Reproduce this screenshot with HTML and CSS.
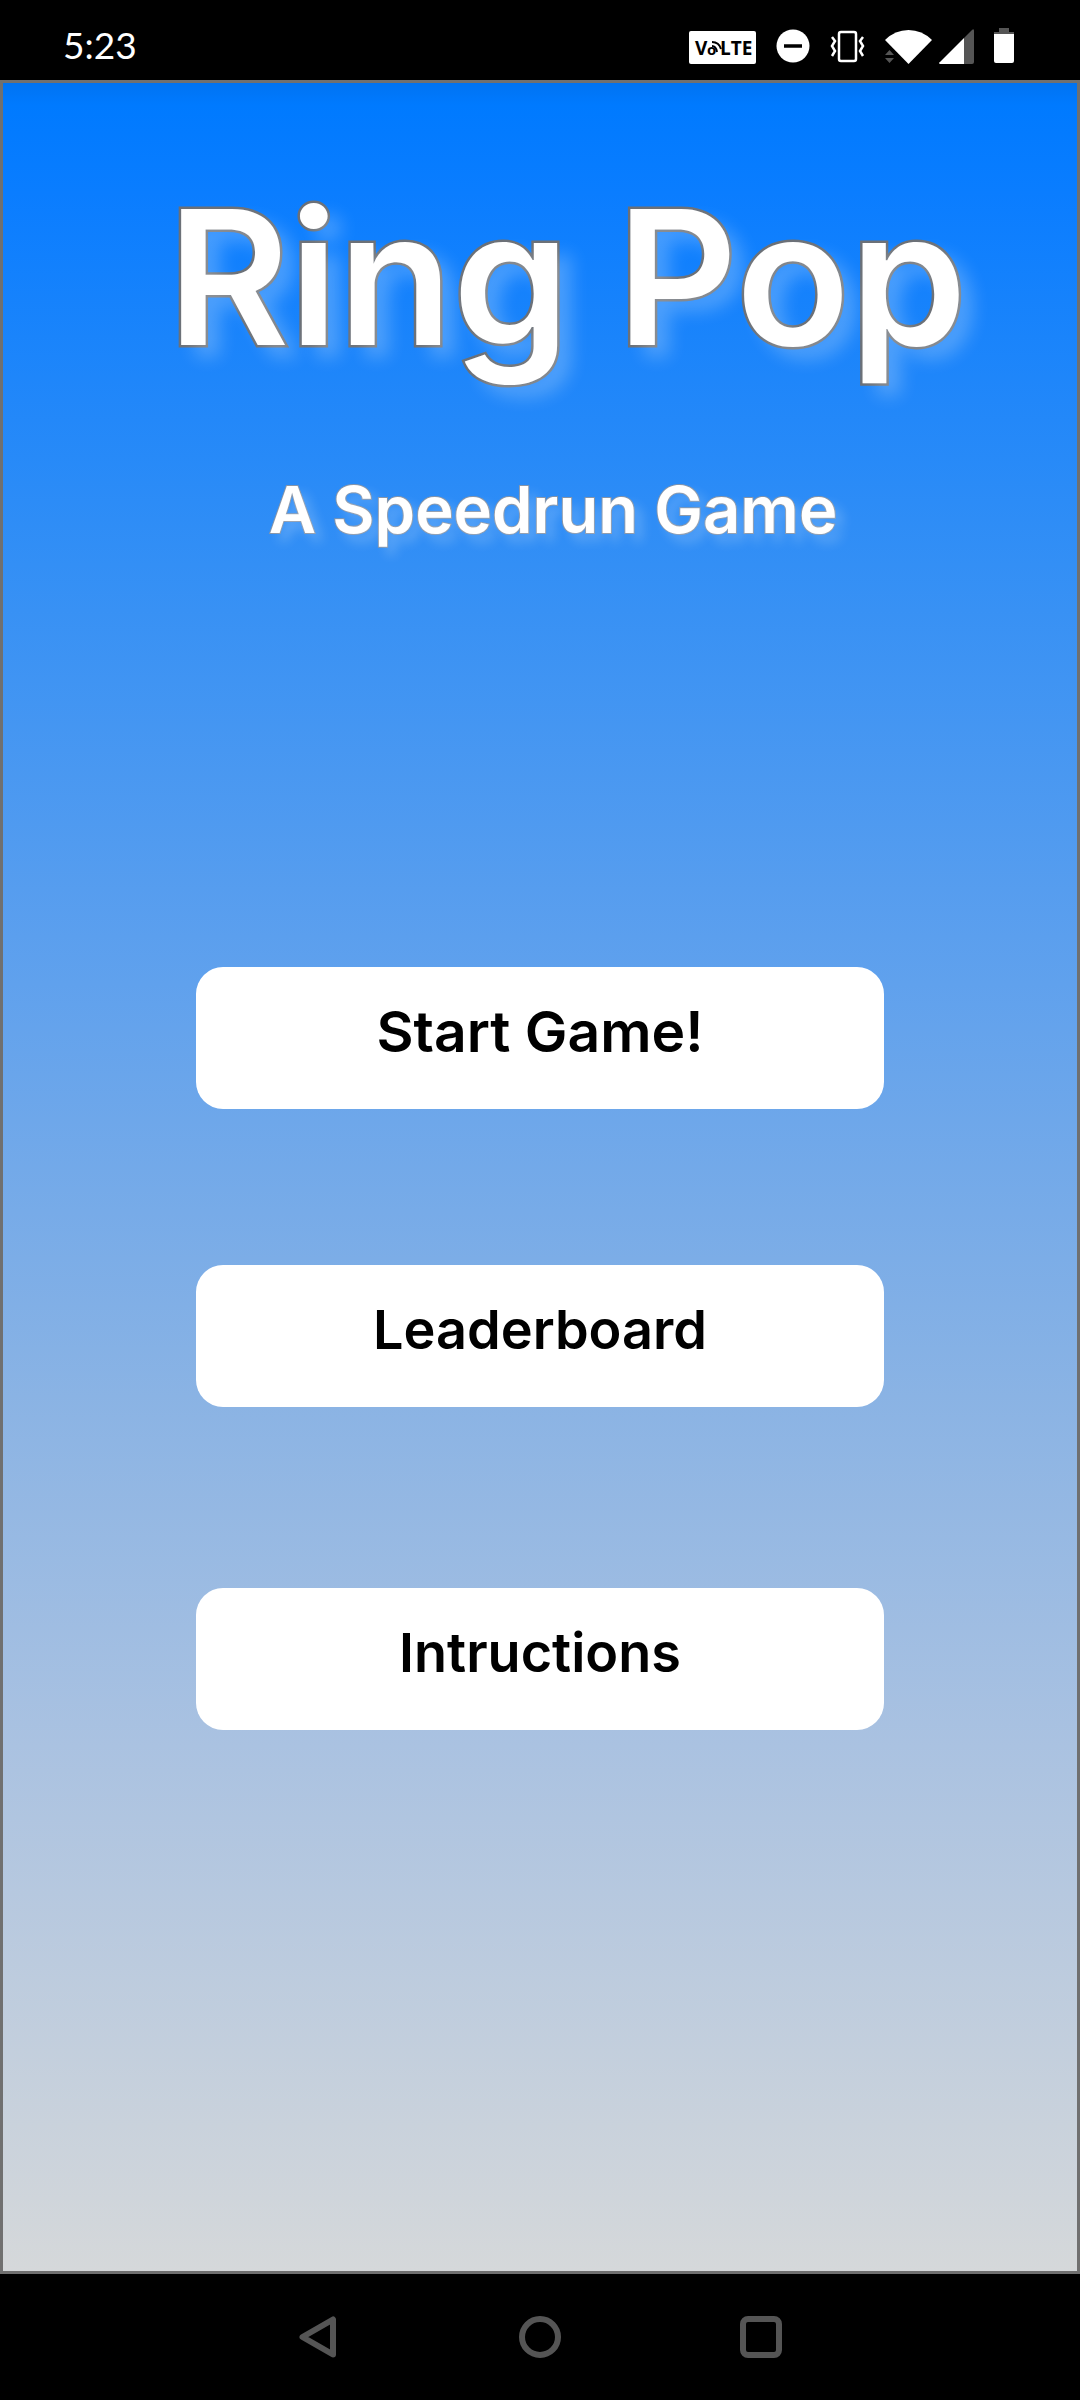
FILE: index.html
```html
<!DOCTYPE html>
<html lang="en">
<head>
<meta charset="utf-8">
<meta name="viewport" content="width=device-width, initial-scale=1">
<title>Ring Pop</title>
<link rel="stylesheet" href="styles.css">
</head>
<body>
<div class="phone">
  <header class="status">
    <time class="clock">5:23</time>
    <div class="status-icons">
      <svg width="67" height="36" viewBox="0 0 67 36" role="img" aria-label="VoLTE">
        <rect y="3" width="67" height="33" rx="2" fill="#fff"/>
        <g class="volte"><text x="6" y="27">V</text><text x="18" y="27" font-size="15">o</text><text x="31" y="27">LTE</text></g>
        <path d="M23 18q4 0 5 6M23 14q7 0 9 7" fill="none" stroke="#000" stroke-width="2"/>
      </svg>
      <svg width="34" height="36" viewBox="0 0 34 36" aria-hidden="true">
        <circle cx="17" cy="18" r="16.500" fill="#fff"/><path d="M8 18h18" stroke="#000" stroke-width="3.500"/>
      </svg>
      <svg width="35" height="36" viewBox="0 0 35 36" aria-hidden="true" fill="none" stroke="#fff">
        <rect x="9" y="4" width="17" height="29" rx="2" stroke-width="2.500"/>
        <path d="M2 9l3 4-3 5 3 5-3 5M33 9l-3 4 3 5-3 5 3 5" stroke-width="2.500"/>
      </svg>
      <div class="network">
        <svg width="47" height="36" viewBox="0 0 47 36" aria-hidden="true">
          <path d="M0 12Q10 2 23.500 2T47 12L23.500 36z" fill="#fff"/>
          <path d="M0 27l4.500-5 4.500 5zM0 30h9l-4.500 5z" fill="#555"/>
        </svg>
        <svg width="35" height="36" viewBox="0 0 35 36" aria-hidden="true">
          <path d="M25 10L33 2q2-2 2 1v31q0 2-2 2h-8z" fill="#555"/><path d="M25 10v26H1q-2-1 0-2z" fill="#fff"/>
        </svg>
      </div>
      <svg width="20" height="36" viewBox="0 0 20 36" aria-hidden="true">
        <path d="M5 0h10v4h5v3H0V4h5z" fill="#555"/><path d="M0 6h20v27q0 2-2 2H2q-2 0-2-2z" fill="#fff"/>
      </svg>
    </div>
  </header>
  <main class="screen">
    <h1 class="title">Ring Pop</h1>
    <p class="subtitle">A Speedrun Game</p>
    <div class="menu">
      <button class="choice choice-primary" type="button">Start Game!</button>
      <button class="choice" type="button">Leaderboard</button>
      <button class="choice choice-last" type="button">Intructions</button>
    </div>
  </main>
  <nav class="navbar" aria-label="System">
    <button class="nav-button" type="button" aria-label="Back">
      <svg width="42" height="42" viewBox="0 0 42 42"><path d="M35 3.500v35L4.500 21z"/></svg>
    </button>
    <button class="nav-button" type="button" aria-label="Home">
      <svg width="42" height="42" viewBox="0 0 42 42"><circle cx="21" cy="21" r="18"/></svg>
    </button>
    <button class="nav-button" type="button" aria-label="Recent apps">
      <svg width="42" height="42" viewBox="0 0 42 42"><rect x="3" y="3" width="36" height="36" rx="5"/></svg>
    </button>
  </nav>
</div>
</body>
</html>
```
FILE: styles.css
```css
* {
  box-sizing: border-box;
}

body {
  margin: 0;
  background: #000;
  font-family: Inter, "Liberation Sans", sans-serif;
}

.phone {
  display: flex;
  flex-direction: column;
  min-height: 100vh;
}

.status {
  display: flex;
  justify-content: space-between;
  align-items: flex-start;
  height: 80px;
  padding: 28px 66px 0 63px;
  color: #fff;
}

.clock {
  font-family: Lato, sans-serif;
  font-size: 37px;
  line-height: 34px;
}

.status-icons {
  display: flex;
  gap: 20px;
}

.status-icons svg {
  display: block;
}

.network {
  display: flex;
  gap: 7px;
}

.volte {
  font-family: "Open Sans", sans-serif;
  font-size: 19px;
  font-weight: 700;
}

.screen {
  flex: 1;
  padding: 104px 0;
  border: 3px solid #707070;
  background: linear-gradient(#0073f2, #007aff 1%, #0a7dff 5%, #338ff5 22%, #5b9fee 39%, #8ab3e4 60%, #aac2e1 76%, #d5d8da);
  text-align: center;
}

.title,
.subtitle {
  margin: 0;
  color: #fff;
  font-weight: 600;
  paint-order: stroke fill;
}

.title {
  padding-left: 54px;
  font-size: 187px;
  line-height: 180px;
  -webkit-text-stroke: 5px #6b7077;
  text-shadow: 14px 12px 18px rgba(255, 255, 255, 0.24);
}

.subtitle {
  margin-top: 110px;
  padding-left: 26px;
  font-size: 65px;
  line-height: 66px;
  -webkit-text-stroke: 2px #8795a8;
  text-shadow: 8px 8px 12px rgba(255, 255, 255, 0.24);
}

.menu {
  display: flex;
  flex-direction: column;
  gap: 156px;
  margin-top: 424px;
  padding: 0 18%;
}

.choice {
  height: 142px;
  padding: 0 0 14px;
  border: 0;
  border-radius: 27px;
  background: #fff;
  color: #000;
  font: inherit;
  font-size: 54px;
  font-weight: 600;
}

.choice-primary {
  font-size: 57px;
}

.choice-last {
  margin-top: 25px;
}

.navbar {
  display: flex;
  justify-content: center;
  align-items: center;
  gap: 179px;
  height: 126px;
}

.nav-button {
  padding: 0;
  border: 0;
  background: none;
}

.nav-button svg {
  display: block;
  fill: none;
  stroke: #555;
  stroke-width: 6px;
  stroke-linejoin: round;
}
```
